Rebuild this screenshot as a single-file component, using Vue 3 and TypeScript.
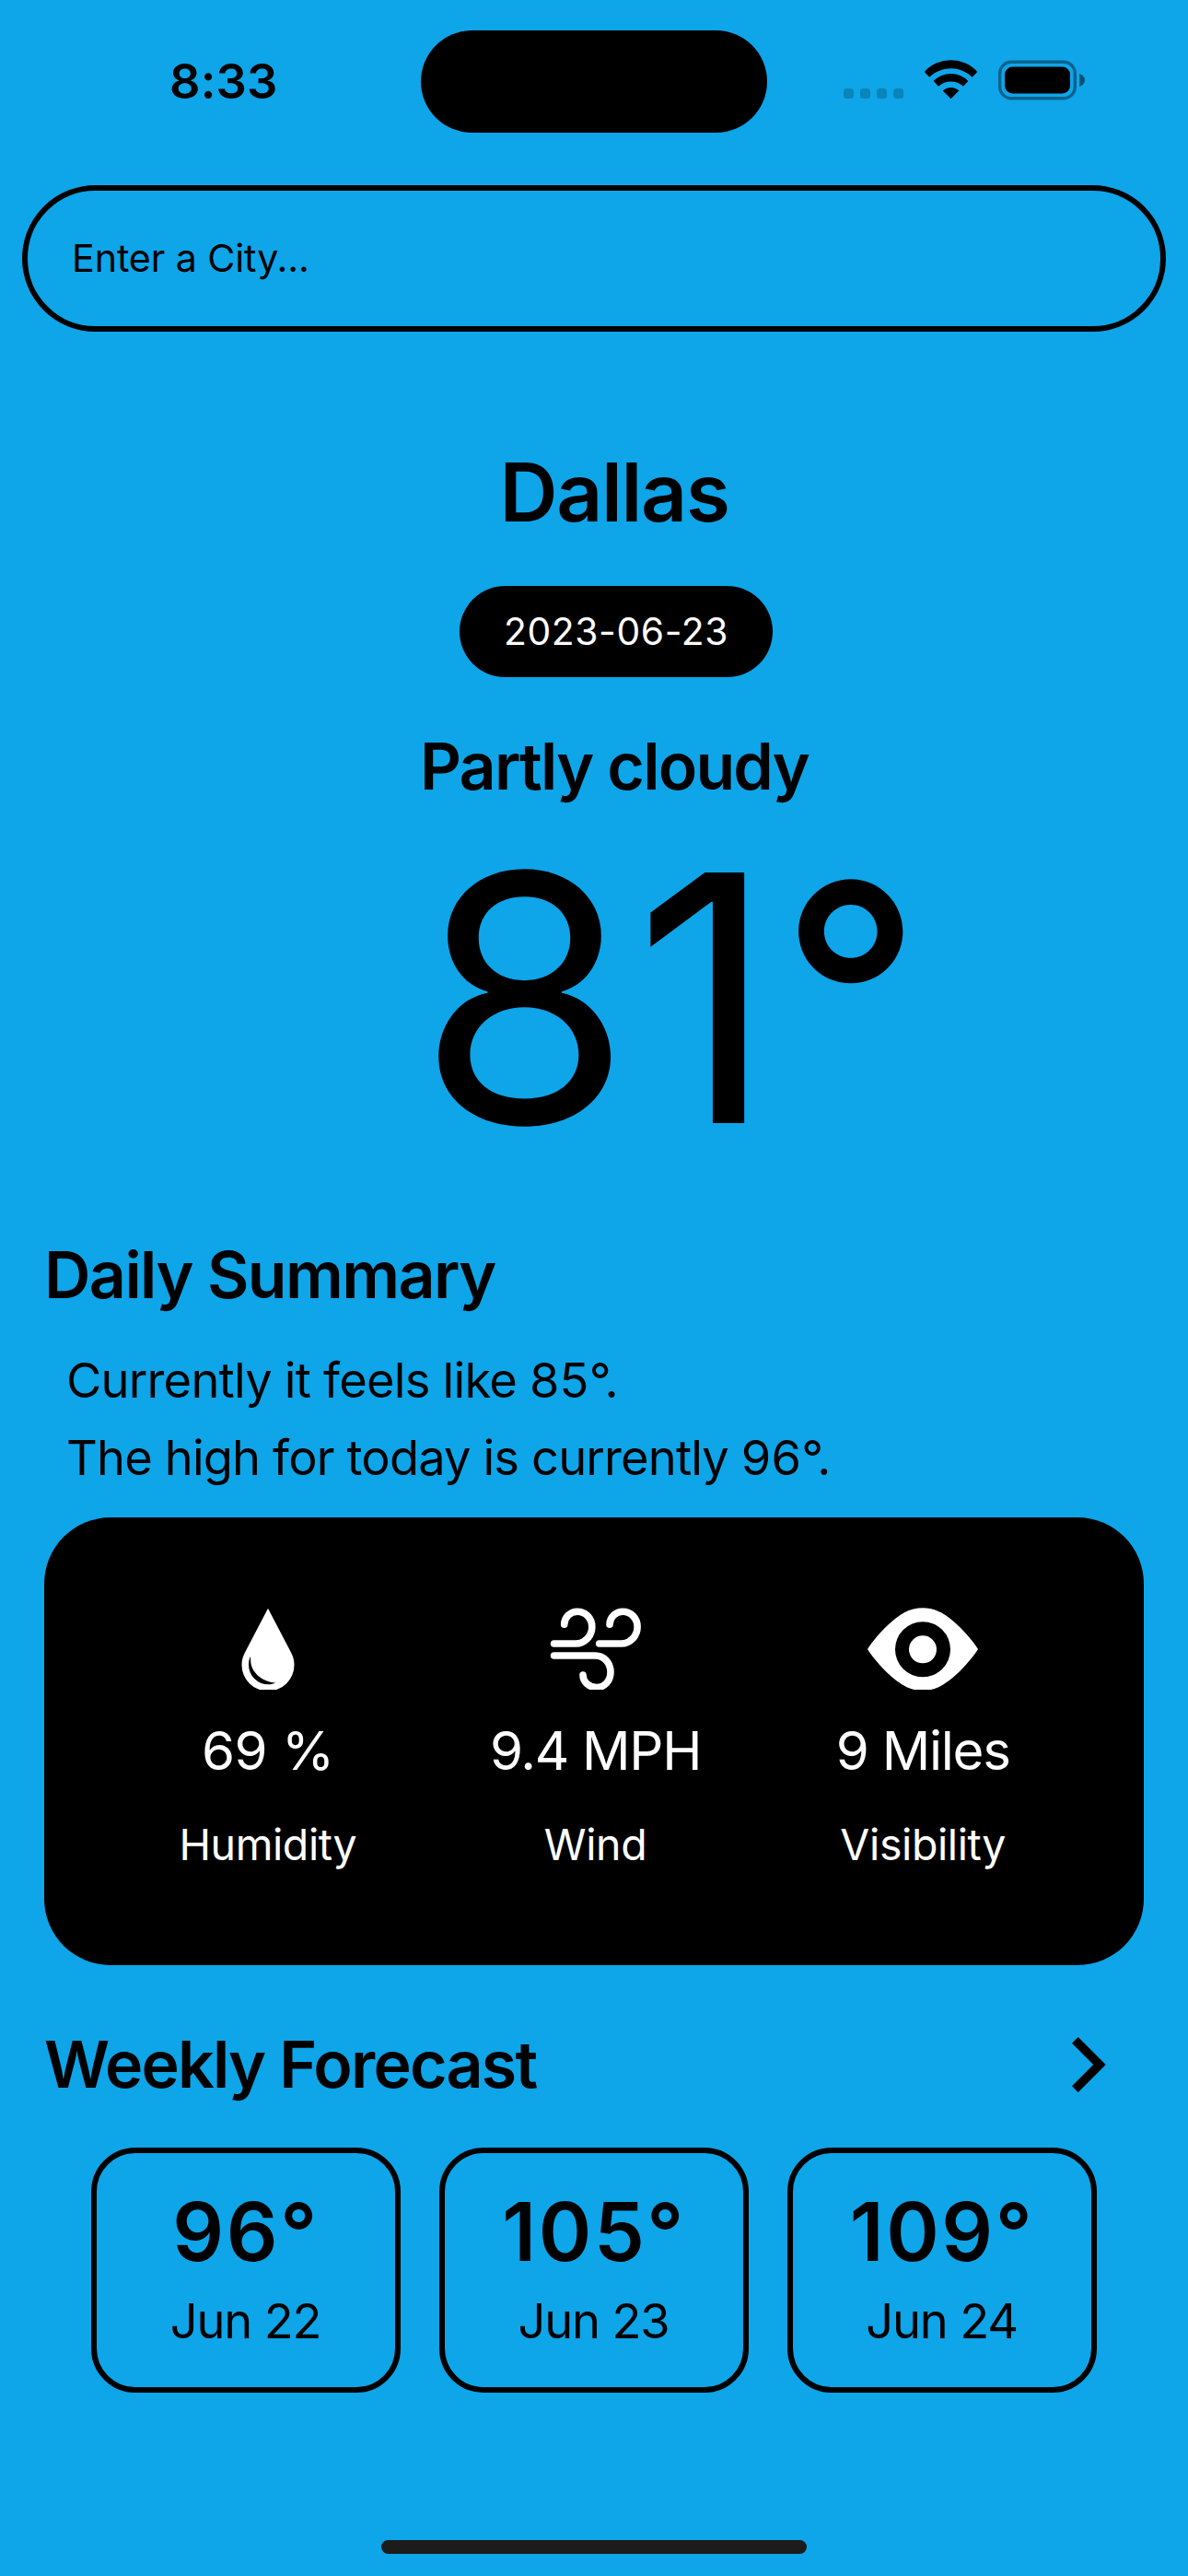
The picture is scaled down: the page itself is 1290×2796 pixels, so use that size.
<script setup lang="ts">
import { ref } from 'vue'

interface Stat {
  icon: 'drop' | 'wind' | 'eye'
  value: string
  label: string
}

interface ForecastDay {
  high: number
  date: string
}

const query = ref('')
const city = 'Dallas'
const today = '2023-06-23'
const condition = 'Partly cloudy'
const temperature = 81

const stats: Stat[] = [
  { icon: 'drop', value: '69 %', label: 'Humidity' },
  { icon: 'wind', value: '9.4 MPH', label: 'Wind' },
  { icon: 'eye', value: '9 Miles', label: 'Visibility' },
]

const forecast: ForecastDay[] = [
  { high: 96, date: 'Jun 22' },
  { high: 105, date: 'Jun 23' },
  { high: 109, date: 'Jun 24' },
]
</script>

<template>
  <div class="screen">
    <header class="status">
      <span class="time">8:33</span>
      <div class="island"></div>
      <div class="signal"><i v-for="n in 4" :key="n"></i></div>
      <svg class="wifi" viewBox="0 0 60 44">
        <path d="M.7 14A38.8 38.8 0 0 1 58.3 14L52.7 19.7A33.3 33.3 0 0 0 6.3 19.7Z" />
        <path d="M10.7 24A26 26 0 0 1 48.3 24L43 29.7A20 20 0 0 0 16 29.7Z" />
        <path d="M20.7 34.6A12.4 12.4 0 0 1 38.3 34.6L29.5 43.3Z" />
      </svg>
      <svg class="battery" viewBox="0 0 96 44">
        <rect x="1.7" y="2.2" width="81.6" height="39.6" rx="12.5" fill="none" stroke="#000" stroke-width="3.4" opacity=".4" />
        <rect x="7" y="7.5" width="71" height="29" rx="8.5" />
        <path d="M88.2 15C91.5 16 94 18.8 94 22C94 25.2 91.5 28 88.2 29Z" opacity=".5" />
      </svg>
    </header>

    <input v-model="query" class="search" type="text" placeholder="Enter a City..." />

    <section class="current">
      <h1 class="city">{{ city }}</h1>
      <span class="date">{{ today }}</span>
      <h2 class="condition">{{ condition }}</h2>
      <div class="temp">{{ temperature }}<span class="ring">°</span></div>
    </section>

    <section class="summary">
      <h2 class="heading">Daily Summary</h2>
      <p class="line feels">Currently it feels like <span class="num">85°.</span></p>
      <p class="line">The high for today is currently <span class="num">96°.</span></p>
    </section>

    <section class="stats">
      <div v-for="s in stats" :key="s.label" class="stat">
        <svg class="icon" viewBox="0 0 120 89">
          <path
            v-if="s.icon === 'drop'"
            fill="#fff"
            fill-rule="evenodd"
            d="M60 .7L35.3 48C32.8 52.5 31.5 57 31.5 62A28.5 28.5 0 0 0 88.5 62C88.5 57 87.2 52.5 84.7 48ZM41 52.7C39.6 55.5 39 58.5 39 62A21.3 21.3 0 0 0 60.3 83.3C63 83.3 65.8 82.7 68.3 81.5C53 81 40.6 69 41.2 56.5Z"
          />
          <g v-else-if="s.icon === 'wind'" fill="none" stroke="#fff" stroke-width="7.6" stroke-linecap="round">
            <path d="M25.7 18.3A14.2 14.2 0 0 1 40 4.2C48.8 4.2 55.8 11.5 55.8 20.7C55.8 30.8 48 39 38.3 39H14.6" />
            <path d="M75 18.3A14.2 14.2 0 0 1 89.3 4.2C98.1 4.2 105.1 11.5 105.1 20.7C105.1 30.8 97.3 39 87.6 39H63.7" />
            <path d="M14.6 52H59.3C68.7 52 76 59.8 76 70C76 79.3 69.5 86.5 61 86.5C52.7 86.5 46 80.5 46 73" />
          </g>
          <template v-else>
            <path
              fill="#fff"
              fill-rule="evenodd"
              d="M0 45C9 31 26 13 40 5.3C46 2 53 .3 60 .3C67 .3 74 2 80 5.3C94 13 111 31 120 45C111 59 94 77 80 84.7C74 88.3 67 90 60 90C53 90 46 88.3 40 84.7C26 77 9 59 0 45ZM60 15.3A30 30 0 1 0 60 75.3A30 30 0 1 0 60 15.3Z"
            />
            <circle cx="60" cy="45.3" r="15" fill="#fff" />
          </template>
        </svg>
        <span class="value">{{ s.value }}</span>
        <span class="label">{{ s.label }}</span>
      </div>
    </section>

    <section class="weekly">
      <div class="weekly-head">
        <h2 class="heading weekly-title">Weekly Forecast</h2>
        <svg class="chevron" viewBox="64 31 37 60">
          <path d="M70.7 31L100.7 61L70.7 91L64 84.2L87.2 61L64 37.8Z" />
        </svg>
      </div>
      <div class="days">
        <article v-for="d in forecast" :key="d.date" class="day">
          <span class="high">{{ d.high }}°</span>
          <span class="day-date">{{ d.date }}</span>
        </article>
      </div>
    </section>

    <div class="home-bar"></div>
  </div>
</template>

<style>
body {
  margin: 0;
  background: #0ea5e9;
}
</style>

<style scoped>
.screen {
  box-sizing: border-box;
  width: 1290px;
  height: 2796px;
  display: flex;
  flex-direction: column;
  overflow: hidden;
  background: #0ea5e9;
  color: #000;
  font-family: Inter, 'Liberation Sans', sans-serif;
}

h1,
h2,
p {
  margin: 0;
}

svg {
  display: block;
  flex: none;
}

.status {
  display: flex;
  align-items: flex-start;
  height: 201px;
  flex: none;
}

.time {
  box-sizing: border-box;
  width: 457px;
  padding: 58px 0 0 184px;
  font-size: 52.4px;
  line-height: 60px;
  font-weight: 600;
  letter-spacing: 0.14px;
}

.island {
  width: 376px;
  height: 111px;
  margin-top: 33px;
  border-radius: 56px;
  background: #000;
}

.signal {
  display: flex;
  gap: 7px;
  margin: 96px 0 0 83px;
}

.signal i {
  width: 11px;
  height: 11px;
  border-radius: 3.5px;
  background: rgba(0, 0, 0, 0.2);
}

.wifi {
  width: 60px;
  height: 44px;
  margin: 64px 0 0 22px;
}

.battery {
  width: 96px;
  height: 44px;
  margin: 64.5px 0 0 21px;
}

.search {
  box-sizing: border-box;
  flex: none;
  width: 1242px;
  height: 159px;
  margin: 0 24px;
  padding: 0 48px 1px;
  border: 6px solid #000;
  border-radius: 80px;
  outline: none;
  background: transparent;
  color: #000;
  font-family: inherit;
  font-size: 41.2px;
  letter-spacing: -0.1px;
}

.search::placeholder {
  color: #000;
  opacity: 1;
}

.current {
  display: flex;
  flex-direction: column;
  align-items: center;
  padding: 120px 0 0 48px;
}

.city {
  padding-right: 4px;
  font-size: 87.3px;
  line-height: 108px;
  font-weight: 600;
  letter-spacing: -1.3px;
}

.date {
  box-sizing: border-box;
  width: 340px;
  height: 99px;
  margin-top: 48px;
  border-radius: 50px;
  background: #000;
  color: #fff;
  text-align: center;
  font-size: 40.8px;
  line-height: 99px;
  letter-spacing: 0.6px;
}

.condition {
  margin-top: 54px;
  padding-right: 4px;
  font-size: 69.8px;
  line-height: 86px;
  font-weight: 600;
  letter-spacing: -1.77px;
}

.temp {
  align-self: flex-start;
  margin: 8px 0 0 406px;
  font-size: 374px;
  line-height: 400px;
  letter-spacing: 3.5px;
}

.ring {
  margin-left: 2px;
  font-size: 338px;
  line-height: 0;
  font-weight: 500;
  vertical-align: 17px;
}

.summary {
  padding: 58px 48px 0;
}

.heading {
  font-size: 69.8px;
  line-height: 86px;
  font-weight: 600;
  letter-spacing: -1.55px;
}

.line {
  padding-left: 24px;
  font-size: 52.4px;
  line-height: 84px;
  letter-spacing: -0.83px;
  white-space: nowrap;
}

.feels {
  margin-top: 29px;
  letter-spacing: -0.76px;
}

.num {
  letter-spacing: 0.2px;
}

.stats {
  box-sizing: border-box;
  display: flex;
  flex: none;
  height: 486px;
  margin: 23px 48px 0;
  padding: 98px 62px 0 65px;
  border-radius: 72px;
  background: #000;
  color: #fff;
}

.stat {
  flex: 1 1 0;
  display: flex;
  flex-direction: column;
  align-items: center;
}

.icon {
  width: 120px;
  height: 89px;
  overflow: hidden;
}

.value {
  margin-top: 30px;
  font-size: 58.2px;
  line-height: 72px;
  letter-spacing: -1.3px;
}

.stat:first-child .value {
  letter-spacing: -0.5px;
}

.label {
  margin-top: 37px;
  font-size: 46.5px;
  line-height: 58px;
  letter-spacing: -0.4px;
}

.weekly {
  padding: 65px 48px 0;
}

.weekly-head {
  display: flex;
  align-items: center;
  justify-content: space-between;
  padding-right: 41px;
}

.weekly-title {
  letter-spacing: -1.75px;
}

.chevron {
  width: 37px;
  height: 60px;
}

.days {
  display: flex;
  gap: 42px;
  margin: 47px 51px 0;
}

.day {
  box-sizing: border-box;
  width: 336px;
  height: 266px;
  padding-top: 31px;
  border: 6px solid #000;
  border-radius: 48px;
  display: flex;
  flex-direction: column;
  align-items: center;
}

.high {
  font-size: 87.3px;
  line-height: 108px;
  font-weight: 600;
  letter-spacing: 2.6px;
}

.day-date {
  margin-top: 11px;
  padding-right: 1px;
  font-size: 52.4px;
  line-height: 64px;
  letter-spacing: -1.15px;
}

.home-bar {
  width: 462px;
  height: 15px;
  margin: auto auto 24px;
  border-radius: 8px;
  background: #1c1c1c;
}
</style>
